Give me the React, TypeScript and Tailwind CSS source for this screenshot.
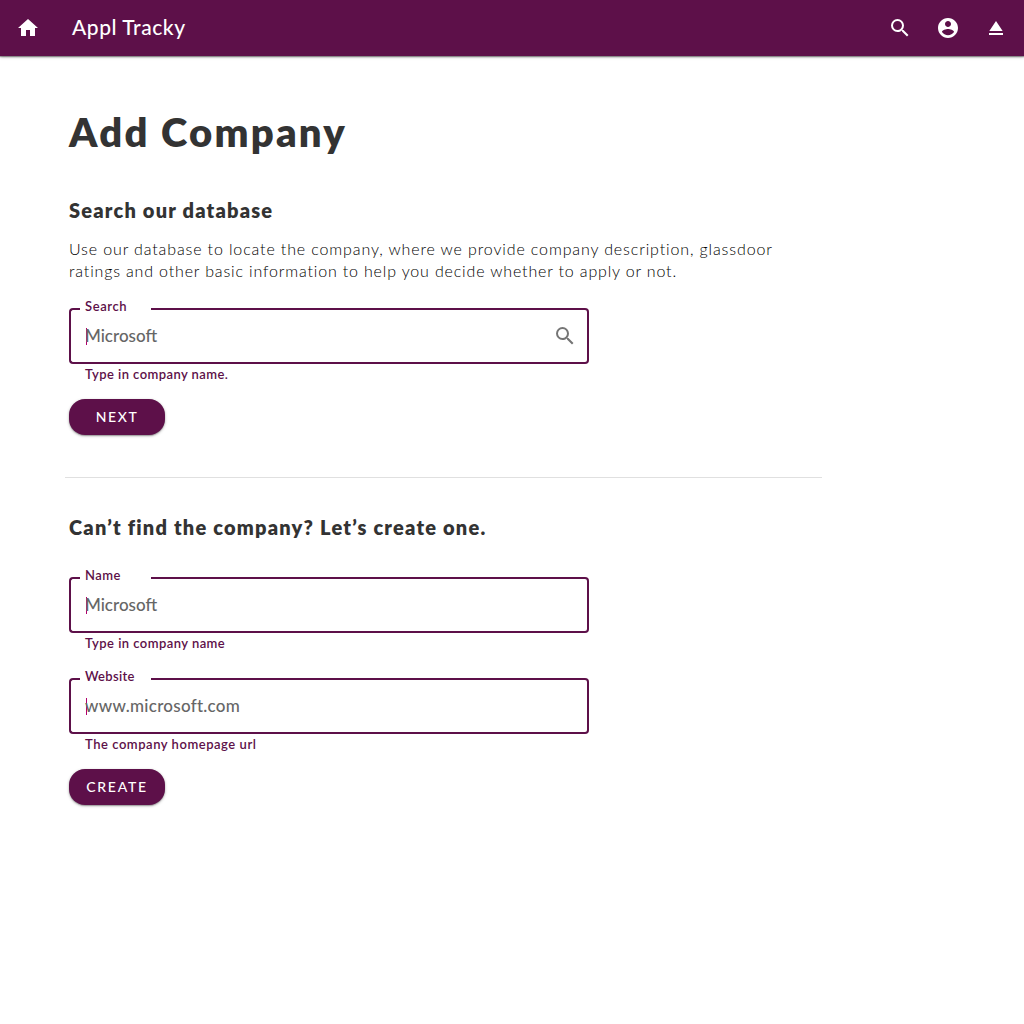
import React from "react";

function Icon({ d, className }: { d: string; className?: string }) {
  return (
    <svg viewBox="0 0 24 24" width="24" height="24" fill="currentColor" className={className} aria-hidden="true">
      <path d={d} />
    </svg>
  );
}

const HOME = "M10 20v-6h4v6h5v-8h3L12 3 2 12h3v8z";
const SEARCH =
  "M15.5 14h-.79l-.28-.27A6.471 6.471 0 0 0 16 9.5 6.5 6.5 0 1 0 9.5 16c1.61 0 3.09-.59 4.23-1.57l.27.28v.79l5 4.99L20.49 19l-4.99-5zm-6 0C7.01 14 5 11.99 5 9.5S7.01 5 9.5 5 14 7.01 14 9.5 11.99 14 9.5 14z";
const ACCOUNT =
  "M12 2C6.48 2 2 6.48 2 12s4.48 10 10 10 10-4.48 10-10S17.52 2 12 2zm0 3c1.66 0 3 1.34 3 3s-1.34 3-3 3-3-1.34-3-3 1.34-3 3-3zm0 14.2c-2.5 0-4.71-1.28-6-3.22.03-1.99 4-3.08 6-3.08 1.99 0 5.97 1.09 6 3.08-1.29 1.94-3.5 3.22-6 3.22z";
const EJECT = "M5 17h14v2H5zm7-12L5.33 15h13.34z";

type FieldProps = {
  label: string;
  placeholder: string;
  helper: string;
  labelSpacing: string;
  textSpacing: string;
  helperSpacing: string;
  icon?: boolean;
};

function Field({ label, placeholder, helper, labelSpacing, textSpacing, helperSpacing, icon }: FieldProps) {
  return (
    <div className="w-[520px] text-[#5d1049]">
      <div className="relative flex h-14 items-center justify-between pl-4 pr-3">
        <div className="pointer-events-none absolute inset-0 flex">
          <div className="w-[11px] rounded-l border-2 border-r-0 border-[#5d1049]" />
          <div className="w-[70.5px] border-b-2 border-[#5d1049]" />
          <div className="flex-1 rounded-r border-2 border-l-0 border-[#5d1049]" />
        </div>
        <span className={`absolute -top-[10px] left-4 text-[13px] font-semibold leading-4 ${labelSpacing}`}>{label}</span>
        <span className="absolute left-[17px] top-5 h-[17px] w-px bg-[#b0006d]" />
        <span className={`relative text-[17px] font-medium leading-6 text-[#666] ${textSpacing}`}>{placeholder}</span>
        {icon && <Icon d={SEARCH} className="text-[#757575]" />}
      </div>
      <p className={`mt-0.5 pb-px pl-4 text-[13px] font-semibold leading-4 ${helperSpacing}`}>{helper}</p>
    </div>
  );
}

function Button({ children, className }: { children: string; className: string }) {
  return (
    <button
      className={`flex h-9 w-24 items-center justify-center rounded-[16px] bg-[#5d1049] text-sm font-medium text-white shadow-[0_1px_3px_rgba(0,0,0,0.3),0_1px_1px_rgba(0,0,0,0.2)] ${className}`}
    >
      {children}
    </button>
  );
}

export default function App() {
  return (
    <div className="min-h-screen bg-white font-['Lato',sans-serif] text-[#333]">
      <header className="flex h-14 items-center bg-[#5d1049] px-4 text-white shadow-[0_1px_3px_rgba(0,0,0,0.35),0_1px_1px_rgba(0,0,0,0.3)]">
        <Icon d={HOME} />
        <span className="ml-8 flex-1 pb-0.5 text-[21px] font-medium leading-7 tracking-[0.55px]">Appl Tracky</span>
        <div className="flex gap-6">
          <Icon d={SEARCH} />
          <Icon d={ACCOUNT} />
          <Icon d={EJECT} />
        </div>
      </header>

      <main className="pl-[69px] pt-[52px]">
        <h1 className="text-[40px] font-extrabold leading-[48px] tracking-[2.2px]">Add Company</h1>
        <h2 className="mt-[42px] text-xl font-extrabold leading-6 tracking-[1.2px]">Search our database</h2>
        <p className="mt-4 text-base font-light leading-[22px] tracking-[0.87px] text-black">
          Use our database to locate the company, where we provide company description, glassdoor
          <br />
          <span className="tracking-[0.84px]">
            ratings and other basic information to help you decide whether to apply or not.
          </span>
        </p>
        <div className="mt-[26px]">
          <Field
            label="Search"
            placeholder="Microsoft"
            helper="Type in company name."
            labelSpacing="tracking-[0.6px]"
            textSpacing="tracking-normal"
            helperSpacing="tracking-[0.43px]"
            icon
          />
        </div>
        <Button className="mt-4 tracking-[1.6px]">NEXT</Button>

        <hr className="-ml-1 mt-[42px] w-[757px] border-[#e0e0e0]" />

        <h2 className="mt-[37px] text-xl font-extrabold leading-6 tracking-[1.21px]">
          Can’t find the company? Let’s create one.
        </h2>
        <div className="mt-[38px] flex flex-col gap-[26px]">
          <Field
            label="Name"
            placeholder="Microsoft"
            helper="Type in company name"
            labelSpacing="tracking-[0.5px]"
            textSpacing="tracking-normal"
            helperSpacing="tracking-[0.45px]"
          />
          <Field
            label="Website"
            placeholder="www.microsoft.com"
            helper="The company homepage url"
            labelSpacing="tracking-[0.3px]"
            textSpacing="tracking-[0.27px]"
            helperSpacing="tracking-[0.54px]"
          />
        </div>
        <Button className="mt-4 tracking-[1.75px]">CREATE</Button>
      </main>
    </div>
  );
}
